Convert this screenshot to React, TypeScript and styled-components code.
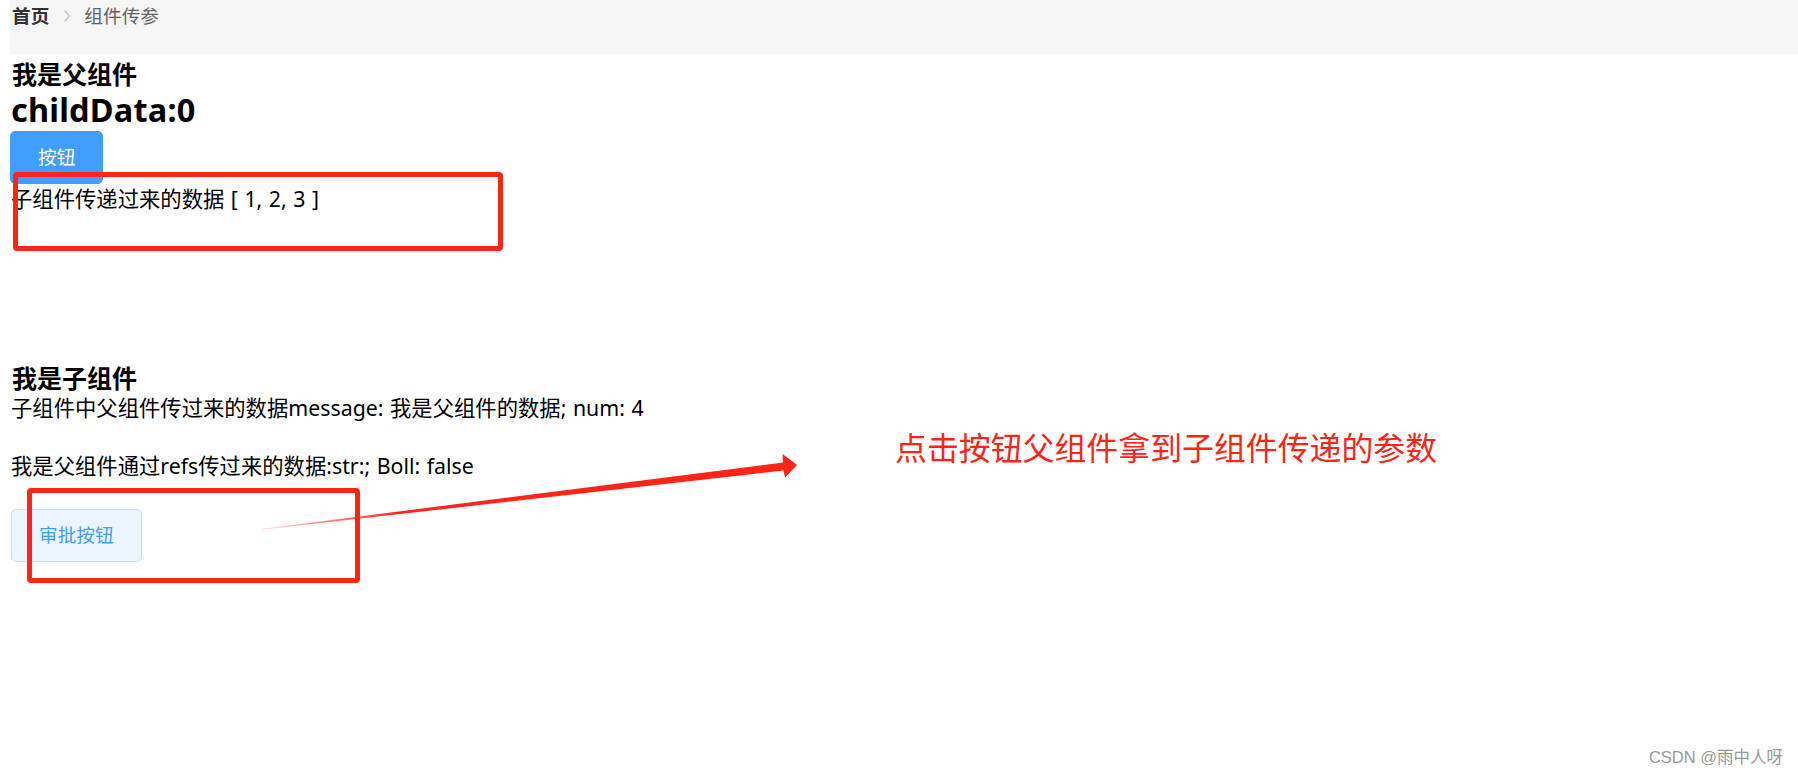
import React from "react";
import styled, { createGlobalStyle } from "styled-components";

const GlobalStyle = createGlobalStyle`
  html, body {
    margin: 0;
    padding: 0;
    background: #ffffff;
  }
  body {
    font-family: "Noto Sans", "Noto Sans CJK SC", sans-serif;
    color: #000000;
  }
`;

const Page = styled.div`
  position: relative;
  width: 1798px;
  height: 774px;
  padding-left: 10px;
  box-sizing: border-box;
  overflow: hidden;
`;

const Breadcrumb = styled.nav`
  height: 54px;
  box-sizing: border-box;
  background: #f6f6f6;
  display: flex;
  align-items: flex-start;
  padding: 4px 0 0 2px;
  font-size: 18.67px;
  line-height: 24px;
`;

const Crumb = styled.span<{ $current?: boolean }>`
  font-weight: ${(p) => (p.$current ? 400 : 700)};
  color: ${(p) => (p.$current ? "#606266" : "#303133")};
`;

const Separator = styled.svg`
  width: 8px;
  height: 14px;
  margin: 5px 13px 0 14px;
  flex: none;
`;

const ParentSection = styled.section`
  display: flex;
  flex-direction: column;
  align-items: flex-start;
`;

const SectionTitle = styled.h3<{ $gap: number }>`
  margin: ${(p) => p.$gap}px 0 0 2px;
  font-size: 25px;
  line-height: 30px;
  font-weight: 700;
`;

const ChildData = styled.h2`
  margin: 2px 0 0 1px;
  font-size: 32.5px;
  line-height: 38px;
  font-weight: 700;
  letter-spacing: 0.2px;
`;

const Button = styled.button<{ $plain?: boolean; $gap: number }>`
  display: block;
  height: 53px;
  margin: ${(p) => p.$gap}px 0 0 ${(p) => (p.$plain ? 1 : 0)}px;
  padding: 0 27px;
  box-sizing: border-box;
  border-radius: 5px;
  border: 1px solid ${(p) => (p.$plain ? "#c6e2ff" : "#409eff")};
  background: ${(p) => (p.$plain ? "#ecf5ff" : "#409eff")};
  color: ${(p) => (p.$plain ? "#409eff" : "#ffffff")};
  font-family: inherit;
  font-size: 18.67px;
  line-height: 1;
  cursor: pointer;
`;

const TextLine = styled.p<{ $gap: number }>`
  margin: ${(p) => p.$gap}px 0 0 1px;
  font-size: 21.33px;
  line-height: 25px;
  color: #000000;
  word-spacing: 1px;
`;

const ChildSection = styled.section`
  display: flex;
  flex-direction: column;
  align-items: flex-start;
`;

const MarkBox = styled.div<{ $l: number; $t: number; $w: number; $h: number }>`
  position: absolute;
  left: ${(p) => p.$l}px;
  top: ${(p) => p.$t}px;
  width: ${(p) => p.$w}px;
  height: ${(p) => p.$h}px;
  box-sizing: border-box;
  border: 5px solid #ff2418;
  border-radius: 4px;
  pointer-events: none;
`;

const ArrowLayer = styled.svg`
  position: absolute;
  left: 0;
  top: 0;
  width: 1798px;
  height: 774px;
  pointer-events: none;
`;

const Annotation = styled.div`
  position: absolute;
  left: 895px;
  top: 432px;
  font-size: 31.9px;
  line-height: 32px;
  color: #ff2418;
  white-space: nowrap;
`;

const Watermark = styled.div`
  position: absolute;
  right: 15px;
  top: 746px;
  font-family: "Liberation Sans", "Noto Sans CJK SC", sans-serif;
  font-size: 16.5px;
  line-height: 22px;
  color: #999999;
  white-space: nowrap;
`;

export default function App() {
  return (
    <>
      <GlobalStyle />
      <Page>
        <Breadcrumb>
          <Crumb>首页</Crumb>
          <Separator viewBox="0 0 8 14">
            <polyline
              points="1.5,1.5 6.5,7 1.5,12.5"
              fill="none"
              stroke="#c0c4cc"
              strokeWidth="1.4"
            />
          </Separator>
          <Crumb $current>组件传参</Crumb>
        </Breadcrumb>

        <ParentSection>
          <SectionTitle $gap={5}>我是父组件</SectionTitle>
          <ChildData>childData:0</ChildData>
          <Button $gap={2}>按钮</Button>
          <TextLine $gap={2}>子组件传递过来的数据 [ 1, 2, 3 ]</TextLine>
        </ParentSection>

        <ChildSection>
          <SectionTitle $gap={152}>我是子组件</SectionTitle>
          <TextLine $gap={2}>子组件中父组件传过来的数据message: 我是父组件的数据; num: 4</TextLine>
          <TextLine $gap={33}>我是父组件通过refs传过来的数据:str:; Boll: false</TextLine>
          <Button $plain $gap={31}>审批按钮</Button>
        </ChildSection>

        <MarkBox $l={13} $t={172} $w={490} $h={79} />
        <MarkBox $l={27} $t={488} $w={333} $h={95} />

        <ArrowLayer viewBox="0 0 1798 774">
          <defs>
            <linearGradient id="shaftFade" x1="263" y1="529" x2="400" y2="512" gradientUnits="userSpaceOnUse">
              <stop offset="0" stopColor="#ff2418" stopOpacity="0.2" />
              <stop offset="1" stopColor="#ff2418" stopOpacity="1" />
            </linearGradient>
          </defs>
          <polygon
            points="263,529.6 783.5,470.5 785,477.5 797,465 782.5,454 783,462.5 263,528.8"
            fill="url(#shaftFade)"
          />
        </ArrowLayer>

        <Annotation>点击按钮父组件拿到子组件传递的参数</Annotation>
        <Watermark>CSDN @雨中人呀</Watermark>
      </Page>
    </>
  );
}
